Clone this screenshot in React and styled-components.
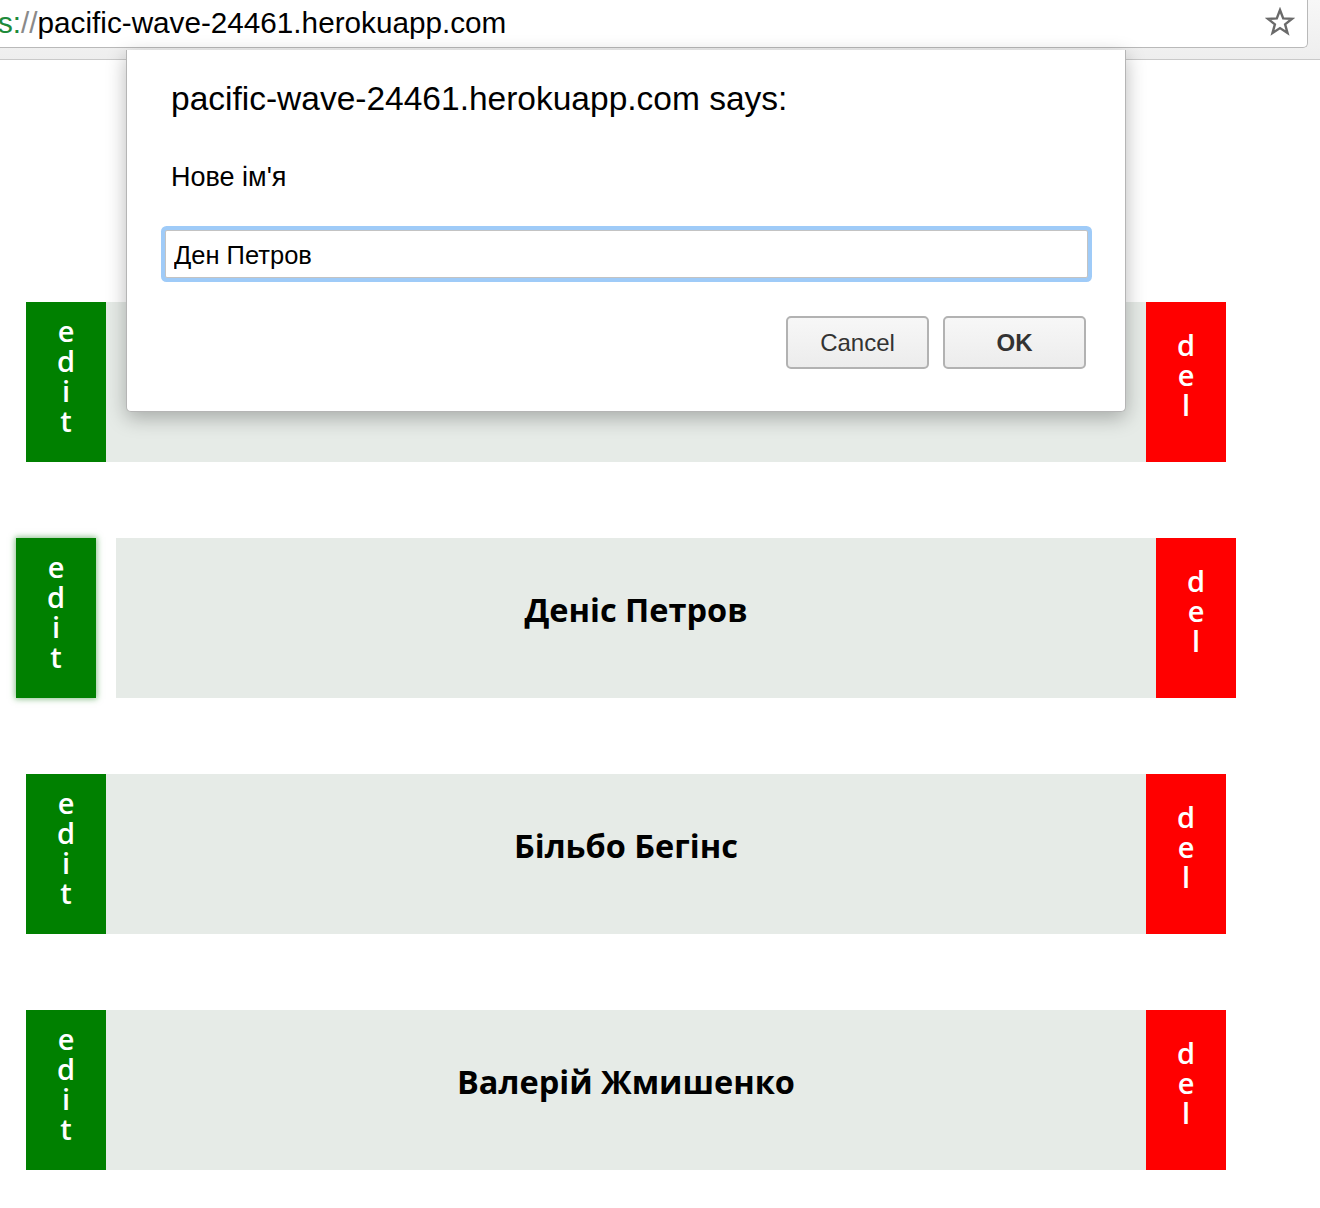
import React from "react";
import styled, { createGlobalStyle } from "styled-components";

const GlobalStyle = createGlobalStyle`
  body {
    margin: 0;
    background: #ffffff;
    font-family: "Open Sans", "Noto Sans", sans-serif;
  }
`;

const Page = styled.div`
  position: relative;
  min-height: 1208px;
  overflow: hidden;
`;

const Toolbar = styled.div`
  height: 59px;
  background: linear-gradient(#f7f7f7, #eeeeee);
  border-bottom: 1px solid #c9c9c9;
`;

const AddressField = styled.div`
  width: 1307px;
  height: 47px;
  background: #ffffff;
  border-right: 1px solid #b9b9b9;
  border-bottom: 1px solid #b9b9b9;
  border-bottom-right-radius: 5px;
  display: flex;
  align-items: center;
  justify-content: space-between;
`;

const Url = styled.div`
  font-family: "Liberation Sans", Arial, sans-serif;
  font-size: 29.7px;
  color: #000000;
  margin-left: -2px;
  margin-top: -1px;
  white-space: nowrap;
`;

const Scheme = styled.span`
  color: #1e8a3a;
`;

const Slashes = styled.span`
  color: #8a8a8a;
`;

const StarButton = styled.div`
  width: 30px;
  height: 30px;
  margin-right: 12px;
  margin-top: -3px;
  display: flex;
  align-items: center;
  justify-content: center;
`;

const List = styled.div`
  padding: 242px 0 0 26px;
  display: flex;
  flex-direction: column;
  gap: 76px;
`;

const Row = styled.div`
  display: flex;
  height: 160px;
  width: 1200px;
`;

const SideButton = styled.div`
  width: 80px;
  flex: none;
  box-sizing: border-box;
  background: ${(p) => (p.kind === "edit" ? "#008000" : "#ff0000")};
  color: #ffffff;
  display: flex;
  flex-direction: column;
  align-items: center;
  justify-content: center;
  font-family: "Open Sans", "Noto Sans", sans-serif;
  font-weight: 600;
  font-size: 29px;
  line-height: 30px;
  padding-bottom: ${(p) => (p.kind === "edit" ? "12px" : "14px")};
  transform: translateX(${(p) => p.shift || 0}px);
  box-shadow: ${(p) => (p.glow ? "0 0 6px 1px rgba(40, 140, 40, 0.55)" : "none")};
`;

const Letter = styled.span`
  display: block;
  height: 30px;
`;

const Name = styled.div`
  flex: 1;
  background: #e6ebe7;
  display: flex;
  align-items: center;
  justify-content: center;
  font-family: "Open Sans", "Noto Sans", sans-serif;
  font-weight: 700;
  font-size: 32.5px;
  color: #000000;
  transform: translateX(${(p) => p.shift || 0}px);
  padding-bottom: 17px;
  box-sizing: border-box;
`;

const Dialog = styled.div`
  position: absolute;
  left: 126px;
  top: 50px;
  width: 1000px;
  height: 362px;
  box-sizing: border-box;
  background: #ffffff;
  border: 1px solid #b5b5b5;
  border-top: none;
  border-radius: 0 0 5px 5px;
  box-shadow: 0 6px 20px rgba(0, 0, 0, 0.28);
  padding: 29px 39px 0 44px;
  font-family: "Liberation Sans", Arial, sans-serif;
  color: #000000;
`;

const DialogTitle = styled.div`
  font-size: 33.5px;
  line-height: 40px;
  white-space: nowrap;
`;

const DialogMessage = styled.div`
  font-size: 27px;
  line-height: 30px;
  margin-top: 43px;
`;

const PromptInput = styled.input`
  display: block;
  margin: 38px 0 0 -6px;
  width: 923px;
  height: 48px;
  box-sizing: border-box;
  border: 1px solid #c3c3c3;
  border-radius: 2px;
  box-shadow: 0 0 0 4px #9fcbf8;
  outline: none;
  padding: 3px 8px 0;
  font-family: "Liberation Sans", Arial, sans-serif;
  font-size: 25.5px;
  color: #000000;
`;

const ButtonRow = styled.div`
  display: flex;
  justify-content: flex-end;
  gap: 14px;
  margin-top: 38px;
`;

const DialogButton = styled.button`
  width: 143px;
  height: 53px;
  border: 2px solid #b2b2b2;
  border-radius: 5px;
  background: linear-gradient(#f7f7f7, #ececec);
  font-family: "Liberation Sans", Arial, sans-serif;
  font-size: 24px;
  font-weight: ${(p) => (p.primary ? 700 : 400)};
  color: #333333;
  padding: 0;
`;

const people = [
  { id: 1, name: "Ден Петров" },
  { id: 2, name: "Деніс Петров", active: true },
  { id: 3, name: "Більбо Бегінс" },
  { id: 4, name: "Валерій Жмишенко" },
];

const Stack = ({ text }) =>
  text.split("").map((ch, i) => <Letter key={i}>{ch}</Letter>);

const App = () => {
  return (
    <Page>
      <GlobalStyle />
      <Toolbar>
        <AddressField>
          <Url>
            <Scheme>s:</Scheme>
            <Slashes>//</Slashes>pacific-wave-24461.herokuapp.com
          </Url>
          <StarButton>
            <svg width="30" height="30" viewBox="0 0 30 30">
              <polygon
                points="15,3 18.2,11.4 27,11.8 20.1,17.4 22.5,26 15,21.1 7.5,26 9.9,17.4 3,11.8 11.8,11.4"
                fill="none"
                stroke="#6a6a6a"
                strokeWidth="2.4"
                strokeLinejoin="miter"
              />
            </svg>
          </StarButton>
        </AddressField>
      </Toolbar>

      <List>
        {people.map((p) => (
          <Row key={p.id}>
            <SideButton kind="edit" shift={p.active ? -10 : 0} glow={p.active}>
              <Stack text="edit" />
            </SideButton>
            <Name shift={p.active ? 10 : 0}>{p.name}</Name>
            <SideButton kind="del" shift={p.active ? 10 : 0}>
              <Stack text="del" />
            </SideButton>
          </Row>
        ))}
      </List>

      <Dialog>
        <DialogTitle>pacific-wave-24461.herokuapp.com says:</DialogTitle>
        <DialogMessage>Нове ім'я</DialogMessage>
        <PromptInput defaultValue="Ден Петров" />
        <ButtonRow>
          <DialogButton>Cancel</DialogButton>
          <DialogButton primary>OK</DialogButton>
        </ButtonRow>
      </Dialog>
    </Page>
  );
};

export default App;
